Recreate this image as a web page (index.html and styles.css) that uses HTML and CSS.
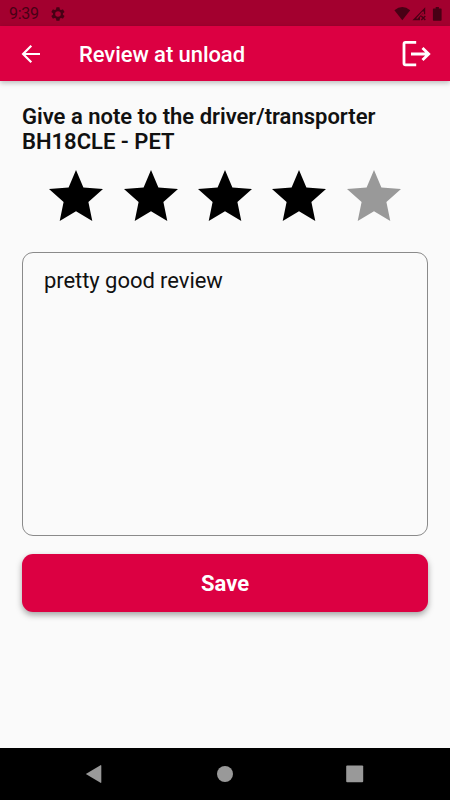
FILE: index.html
```html
<!DOCTYPE html>
<html lang="en">
<head>
<meta charset="utf-8">
<title>Review at unload</title>
<link rel="stylesheet" href="styles.css">
</head>
<body>
<div class="screen">
  <div class="status-bar">
    <span class="clock">9:39</span>
    <svg class="gear" viewBox="0 0 24 24"><path fill-rule="evenodd" d="M19.4 13a7.500 7.500 0 0 0 0-2l2.100-1.600a.5.500 0 0 0 .1-.7l-2-3.400a.5.500 0 0 0-.6-.2l-2.500 1a7.500 7.500 0 0 0-1.700-1l-.4-2.600a.5.500 0 0 0-.5-.5h-4a.5.500 0 0 0-.5.500L9 5.100a7.500 7.500 0 0 0-1.700 1l-2.500-1a.5.500 0 0 0-.6.200l-2 3.400a.5.500 0 0 0 .1.700L4.500 11a7.500 7.500 0 0 0 0 2l-2.200 1.600a.5.500 0 0 0-.1.700l2 3.400c.1.200.4.300.6.200l2.500-1a7.500 7.500 0 0 0 1.700 1l.4 2.600c0 .3.200.5.500.5h4c.3 0 .5-.2.500-.5l.4-2.600a7.500 7.500 0 0 0 1.700-1l2.500 1c.2.100.5 0 .6-.2l2-3.400a.5.500 0 0 0-.1-.7zM12 16.200a4.200 4.200 0 1 1 0-8.400 4.200 4.200 0 0 1 0 8.400z"/></svg>
    <svg class="indicators" viewBox="0 0 50 16"><path d="M.4 4.300Q8.300-2.200 16.200 4.300L8.300 14.200Z"/><path d="M31.200 1.200V8.200H27.200V10L26 11.300V14.200H18.400Z"/><path class="signal-gap" d="M29.300 5.400V8.500M22.700 12.600L28.800 6"/><path class="no-signal" d="M27.300 9.900l4 4m0-4l-4 4"/><path d="M39.700 2.400h2V.9h3.200v1.500h2q.7 0 .7.700v10.800q0 .8-.7.800h-7.200q-.8 0-.8-.8V3.100q0-.7.800-.7z"/></svg>
  </div>
  <header class="app-bar">
    <svg class="back" viewBox="0 0 20 20"><path d="M19 10H2.500M10.300 1.800L2.100 10l8.200 8.200"/></svg>
    <h1 class="title">Review at unload</h1>
    <svg class="logout" viewBox="0 0 30 28"><path d="M15.200 2.400H4.500q-1.500 0-1.500 1.500v19.400q0 1.500 1.500 1.500h10.700"/><path d="M10 14h17.500M21.500 7.900l6.200 6.100-6.200 6.100"/></svg>
  </header>
  <main class="content">
    <h2 class="prompt">Give a note to the driver/transporter<br>BH18CLE - PET</h2>
    <div class="stars">
      <svg class="star" viewBox="0 0 54 51"><path d="M27 0l7.400 17.600L54 19 39.400 32l3.900 19L27 41.200 10.700 51l3.900-19L0 19l19.600-1.400z"/></svg>
      <svg class="star" viewBox="0 0 54 51"><path d="M27 0l7.400 17.600L54 19 39.400 32l3.900 19L27 41.200 10.700 51l3.900-19L0 19l19.600-1.400z"/></svg>
      <svg class="star" viewBox="0 0 54 51"><path d="M27 0l7.400 17.600L54 19 39.400 32l3.900 19L27 41.200 10.700 51l3.900-19L0 19l19.600-1.400z"/></svg>
      <svg class="star" viewBox="0 0 54 51"><path d="M27 0l7.400 17.600L54 19 39.400 32l3.900 19L27 41.200 10.700 51l3.900-19L0 19l19.600-1.400z"/></svg>
      <svg class="star star-off" viewBox="0 0 54 51"><path d="M27 0l7.400 17.600L54 19 39.400 32l3.900 19L27 41.200 10.700 51l3.900-19L0 19l19.600-1.400z"/></svg>
    </div>
    <div class="note">pretty good review</div>
    <button class="save" type="button">Save</button>
  </main>
  <nav class="nav-bar">
    <svg class="nav-icon" viewBox="0 0 20 20"><path d="M1.800 10L16.500 1.200q.8-.3.800.5v16.600q0 .8-.8.500z"/></svg>
    <svg class="nav-icon" viewBox="0 0 20 20"><circle cx="10" cy="10" r="8"/></svg>
    <svg class="nav-icon" viewBox="0 0 20 20"><rect x="1.200" y="1.500" width="17" height="16.800" rx="1"/></svg>
  </nav>
</div>
</body>
</html>
```
FILE: styles.css
```css
* { box-sizing: border-box; }
body { margin: 0; font-family: Roboto, sans-serif; }
svg { display: block; flex: none; }
h1, h2 { margin: 0; }
.screen {
  width: 450px;
  height: 800px;
  display: flex;
  flex-direction: column;
  background: #fafafa;
}
.status-bar {
  height: 26px;
  flex: none;
  display: flex;
  align-items: center;
  padding: 1px 6px 0 9px;
  background: #a3002f;
  color: #480015;
}
.clock { width: 41px; padding-top: 1px; font-size: 16px; line-height: 24px; letter-spacing: -.25px; }
.gear { width: 16px; height: 16px; fill: #480015; }
.indicators { width: 50px; height: 16px; margin-left: auto; fill: #480015; }
.no-signal { stroke: #480015; stroke-width: 1.400; }
.signal-gap { fill: none; stroke: #a3002f; stroke-width: 1.200; }
.app-bar {
  height: 55px;
  flex: none;
  display: flex;
  align-items: center;
  padding: 1px 19px 0 21px;
  background: #dc0042;
  color: #fff;
  box-shadow: 0 2px 5px rgba(0, 0, 0, .25);
}
.back { width: 20px; height: 20px; fill: none; stroke: #fff; stroke-width: 2.200; }
.title { margin-left: 38px; padding-top: 2px; font-size: 22px; line-height: 28px; font-weight: 500; letter-spacing: -.07px; }
.logout { width: 30px; height: 28px; margin-left: auto; fill: none; stroke: #fff; stroke-width: 2.800; }
.content {
  flex: 1;
  display: flex;
  flex-direction: column;
  padding: 23px 22px 0;
}
.prompt { font-size: 22px; line-height: 25px; font-weight: 600; color: #111; white-space: nowrap; }
.stars { display: flex; gap: 20.400px; padding: 16px 0 0 27.300px; }
.star { width: 54px; height: 51px; fill: #000; }
.star-off { fill: #999; }
.note {
  height: 284px;
  margin-top: 31px;
  padding: 15px 21px;
  border: 1px solid #8a8a8a;
  border-radius: 11px;
  font-size: 22px;
  line-height: 26px;
  letter-spacing: -.06px;
  color: #111;
}
.save {
  height: 58px;
  margin-top: 18px;
  padding-top: 3px;
  border: 0;
  border-radius: 11px;
  background: #dc0042;
  color: #fff;
  font: 700 22px/26px Roboto, sans-serif;
  box-shadow: 0 3px 6px rgba(0, 0, 0, .35);
}
.nav-bar {
  height: 52px;
  flex: none;
  display: flex;
  justify-content: space-between;
  align-items: center;
  padding: 0 85px 0 84px;
  background: #000;
}
.nav-icon { width: 20px; height: 20px; fill: #999; }
```
